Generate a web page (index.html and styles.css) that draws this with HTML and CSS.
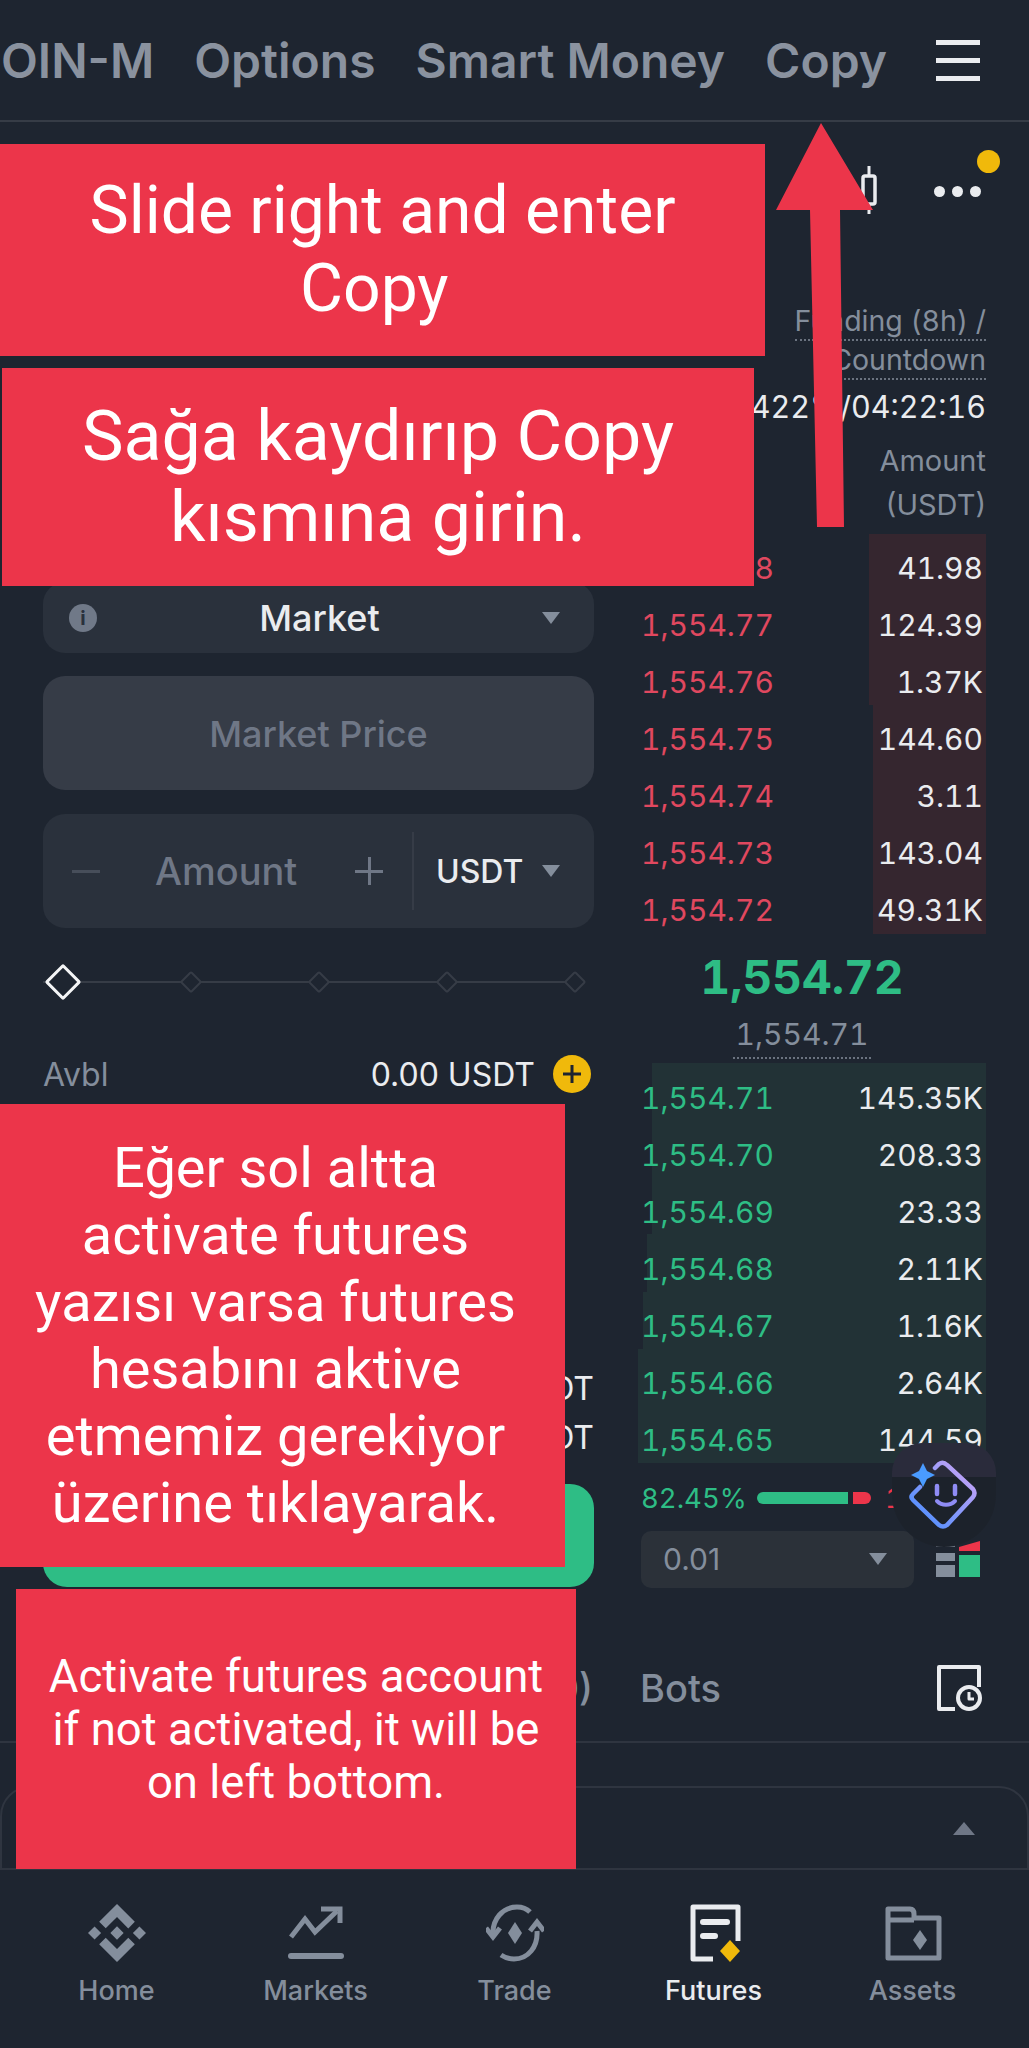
FILE: index.html
```html
<!DOCTYPE html>
<html lang="en">
<head>
    <meta charset="UTF-8">
    <meta name="viewport" content="width=device-width, initial-scale=1.0">
    <title>Futures</title>
    <link rel="stylesheet" href="styles.css">
</head>
<body>
<div class="screen">
    <header class="top-bar">
        <nav class="top-tabs">
            <span>COIN-M</span>
            <span>Options</span>
            <span>Smart Money</span>
            <span>Copy</span>
        </nav>
        <div class="burger"><i></i><i></i><i></i></div>
    </header>

    <main class="trade">
        <section class="order-form">
            <div class="field field-type">
                <span class="info">i</span>
                <span class="field-label">Market</span>
                <span class="caret"></span>
            </div>
            <div class="field field-price">Market Price</div>
            <div class="field field-amount">
                <span class="minus"></span>
                <span class="amount-label">Amount</span>
                <span class="plus"></span>
                <span class="unit">USDT <span class="caret"></span></span>
            </div>
            <div class="slider">
                <i class="knob"></i><i class="tick"></i><i class="tick"></i><i class="tick"></i><i class="tick"></i>
            </div>
            <div class="avbl">
                <span class="avbl-name">Avbl</span>
                <span class="avbl-value">0.00 USDT</span>
                <span class="add">
                    <svg width="22" height="22" viewBox="0 0 22 22"><path d="M11 2v18M2 11h18" stroke="#1e2530" stroke-width="3" fill="none"/></svg>
                </span>
            </div>
            <div class="summary">
                <div>Max 0.00 USDT</div>
                <div>Cost 0.00 USDT</div>
            </div>
            <div class="buy-button"></div>
        </section>

        <section class="book">
            <div class="book-tools">
                <svg class="candle" width="20" height="48" viewBox="0 0 20 48"><path d="M10 0v10M10 38v10" stroke="#eaecef" stroke-width="3"/><rect x="4" y="10" width="12" height="28" rx="2" fill="none" stroke="#eaecef" stroke-width="3.5"/></svg>
                <div class="dots"><i></i><i></i><i></i></div>
                <span class="notice"></span>
            </div>
            <div class="book-info">
                <div><span class="dotted">Funding (8h) /</span></div>
                <div><span class="dotted">Countdown</span></div>
                <div class="funding">0.0422%/04:22:16</div>
            </div>
            <div class="book-head">Amount<br>(USDT)</div>

            <div class="row ask"><i class="depth" style="width:33.6%"></i><span>1,554.78</span><b>41.98</b></div>
            <div class="row ask"><i class="depth" style="width:33.6%"></i><span>1,554.77</span><b>124.39</b></div>
            <div class="row ask"><i class="depth" style="width:33.6%"></i><span>1,554.76</span><b>1.37K</b></div>
            <div class="row ask"><i class="depth" style="width:32.5%"></i><span>1,554.75</span><b>144.60</b></div>
            <div class="row ask"><i class="depth" style="width:32.5%"></i><span>1,554.74</span><b>3.11</b></div>
            <div class="row ask"><i class="depth" style="width:32.5%"></i><span>1,554.73</span><b>143.04</b></div>
            <div class="row ask"><i class="depth" style="width:32.5%"></i><span>1,554.72</span><b>49.31K</b></div>

            <div class="last-price">1,554.72</div>
            <div class="mark-price"><span>1,554.71</span></div>

            <div class="row bid"><i class="depth" style="width:96%"></i><span>1,554.71</span><b>145.35K</b></div>
            <div class="row bid"><i class="depth" style="width:96%"></i><span>1,554.70</span><b>208.33</b></div>
            <div class="row bid"><i class="depth" style="width:96%"></i><span>1,554.69</span><b>23.33</b></div>
            <div class="row bid"><i class="depth" style="width:97.4%"></i><span>1,554.68</span><b>2.11K</b></div>
            <div class="row bid"><i class="depth" style="width:98.6%"></i><span>1,554.67</span><b>1.16K</b></div>
            <div class="row bid"><i class="depth" style="width:100%"></i><span>1,554.66</span><b>2.64K</b></div>
            <div class="row bid"><i class="depth" style="width:100%"></i><span>1,554.65</span><b>144.59</b></div>

            <div class="ratio">
                <span class="ratio-buy">82.45%</span>
                <i class="ratio-green"></i>
                <i class="ratio-red"></i>
                <span class="ratio-sell">17.55%</span>
            </div>
            <div class="book-foot">
                <div class="step">0.01 <span class="caret"></span></div>
                <svg width="46" height="38" viewBox="0 0 46 38"><path d="M24 7l21-6v10H24z" fill="#ec354a"/><path d="M1 4h19v3H1z" fill="#6b7380"/><path d="M1 13h19v8H1zM1 25h19v12H1z" fill="#848e9c"/><path d="M24 15h21v22H24z" fill="#2ebd85"/></svg>
            </div>
        </section>
    </main>

    <div class="sub-tabs">
        <span class="sub-left">Positions (0)</span>
        <span class="sub-bots">Bots</span>
        <svg width="46" height="46" viewBox="0 0 46 46" fill="none" stroke="#eaecef" stroke-width="4" stroke-linejoin="round"><path d="M19 44H3V2h40v20"/><circle cx="33" cy="33" r="11"/><path d="M33 27v7h5" stroke-width="3"/></svg>
    </div>

    <div class="panel">
        <span class="panel-arrow"></span>
    </div>

    <nav class="bottom-nav">
        <div class="nav-item">
            <svg width="58" height="58" viewBox="0 0 126.61 126.61" fill="#848e9c"><path d="M38.73 53.2l24.59-24.58 24.6 24.6 14.3-14.31L63.32 0 24.42 38.9zM0 63.31l14.3-14.31 14.31 14.31-14.31 14.3zM38.73 73.41L63.32 98l24.59-24.59 14.31 14.29-38.9 38.91-38.91-38.88v-.03zM98 63.31l14.3-14.31 14.31 14.3-14.31 14.32zM77.83 63.3L63.32 48.78 52.59 59.51l-1.24 1.23-2.54 2.54 14.51 14.5 14.51-14.47z"/></svg>
            <span>Home</span>
        </div>
        <div class="nav-item">
            <svg width="58" height="58" viewBox="0 0 58 58" fill="none" stroke="#848e9c" stroke-width="5"><path d="M4 33l14-18 10 13L50 7"/><path d="M34 5h19v14"/><path d="M4 52h50" stroke-width="6" stroke-linecap="round"/></svg>
            <span>Markets</span>
        </div>
        <div class="nav-item">
            <svg width="58" height="58" viewBox="0 0 58 58" fill="none" stroke="#848e9c" stroke-width="5"><path d="M7 31C6 15 17 3 31 3c5 0 10 2 13 5"/><path d="M51 27c1 16-9 28-23 28-5 0-10-2-13-4"/><path d="M0 24l7 9 7-9M44 27l7-9 7 9"/><path d="M29 18l7 11-7 11-7-11z" fill="#848e9c" stroke="none"/></svg>
            <span>Trade</span>
        </div>
        <div class="nav-item active">
            <svg width="58" height="58" viewBox="0 0 58 58" fill="none"><path d="M28 55H8V3h45v34" stroke="#eaecef" stroke-width="5" stroke-linejoin="round"/><path d="M18 18h24M18 32h12" stroke="#eaecef" stroke-width="6" stroke-linecap="round"/><path d="M45 36l10 11-10 11-10-11z" fill="#f0b90b"/></svg>
            <span>Futures</span>
        </div>
        <div class="nav-item">
            <svg width="58" height="58" viewBox="0 0 58 58" fill="none" stroke="#848e9c" stroke-width="5" stroke-linejoin="round"><path d="M4 54V5h22c3 0 4 2 4 5v4h25v40z"/><path d="M4 16h26"/><path d="M36 26l7 10-7 10-7-10z" fill="#848e9c" stroke="none"/></svg>
            <span>Assets</span>
        </div>
    </nav>

    <!-- tutorial marks drawn over the app -->
    <div class="callout callout-slide">Slide right and enter<br>Copy&nbsp;</div>
    <div class="callout callout-saga">Sağa kaydırıp Copy<br>kısmına girin.</div>
    <div class="callout callout-eger">Eğer sol altta<br>activate futures<br>yazısı varsa futures<br>hesabını aktive<br>etmemiz gerekiyor<br>üzerine tıklayarak.</div>
    <div class="callout callout-activate">Activate futures account<br>if not activated, it will be<br>on left bottom.</div>
    <svg class="up-arrow" width="100" height="406" viewBox="0 0 100 406"><path d="M46 0L98 87H65L69 404H42L35 87H1z" fill="#ec354a"/></svg>

    <div class="assistant">
        <svg width="72" height="72" viewBox="0 0 72 72" fill="none">
            <defs><linearGradient id="ai" x1="0" y1="1" x2="1" y2="0"><stop offset="0" stop-color="#3f8cff"/><stop offset="1" stop-color="#d5a6f5"/></linearGradient></defs>
            <path d="M12 27L5 34Q2 37 5 40L31 65Q35 68 39 65L65 37Q68 33 65 29L39 5Q35 1 31 4L27 8" stroke="url(#ai)" stroke-width="4.5" stroke-linecap="round"/>
            <path d="M15 3l4 8 8 4-8 4-4 8-4-8-8-4 8-4z" fill="#4a9bff"/>
            <path d="M29 26v8M47 26v8" stroke="#8f8cf5" stroke-width="4.5" stroke-linecap="round"/>
            <path d="M29 41c5 5 13 5 18 0" stroke="#8f8cf5" stroke-width="4" stroke-linecap="round"/>
        </svg>
    </div>
</div>
</body>
</html>
```

FILE: styles.css
```css
* {
    box-sizing: border-box;
}
body {
    margin: 0;
    background: #1e2530;
    font-family: Inter, "Liberation Sans", sans-serif;
    color: #eaecef;
}
i {
    display: block;
    font-style: normal;
}
.screen {
    position: relative;
    width: 1029px;
    height: 2048px;
    overflow: hidden;
    background: #1e2530;
}

/* top bar */
.top-bar {
    height: 122px;
    display: flex;
    align-items: center;
    border-bottom: 2px solid #363c46;
    padding: 0 49px 0 0;
}
.top-tabs {
    flex: 1;
    min-width: 0;
    display: flex;
    justify-content: flex-end;
    gap: 40px;
    padding-right: 49px;
    font-size: 48px;
    font-weight: 600;
    color: #8a929f;
    white-space: nowrap;
    overflow: hidden;
}
.burger {
    width: 44px;
    display: flex;
    flex-direction: column;
    gap: 13px;
}
.burger i {
    height: 5px;
    background: #eaecef;
}

/* main two columns */
.trade {
    display: flex;
    padding-left: 43px;
    height: 1486px;
}
.order-form {
    width: 551px;
    padding-top: 460px;
    margin-right: 44px;
}
.field {
    display: flex;
    align-items: center;
    background: #2a313c;
    border-radius: 22px;
}
.field-type {
    height: 71px;
    padding: 0 34px 0 26px;
    justify-content: space-between;
}
.field-label {
    font-size: 36px;
    font-weight: 500;
}
.info {
    width: 28px;
    height: 28px;
    border-radius: 50%;
    background: #707988;
    color: #2a313c;
    font-size: 20px;
    font-weight: 700;
    text-align: center;
    line-height: 28px;
}
.caret {
    display: inline-block;
    width: 0;
    height: 0;
    border-left: 9px solid transparent;
    border-right: 9px solid transparent;
    border-top: 12px solid #848e9c;
}
.field-price {
    height: 114px;
    margin-top: 23px;
    padding-top: 2px;
    justify-content: center;
    background: #363c47;
    color: #6f7786;
    font-size: 36px;
    font-weight: 500;
}
.field-amount {
    height: 114px;
    margin-top: 24px;
    padding: 0 34px 0 29px;
    font-size: 38px;
    color: #6f7786;
}
.minus {
    width: 28px;
    height: 3px;
    background: #474e5a;
}
.amount-label {
    margin-left: 55px;
    width: 145px;
    font-weight: 500;
}
.plus {
    width: 28px;
    height: 28px;
    margin-left: 55px;
    background: linear-gradient(#6f7786, #6f7786) center / 28px 3px no-repeat,
                linear-gradient(#6f7786, #6f7786) center / 3px 28px no-repeat;
}
.unit {
    margin-left: 29px;
    height: 78px;
    padding-left: 22px;
    border-left: 2px solid #363c47;
    display: flex;
    flex: 1;
    align-items: center;
    justify-content: space-between;
    color: #eaecef;
    font-size: 32px;
    font-weight: 500;
}
.slider {
    margin-top: 36px;
    width: 535px;
    height: 36px;
    display: flex;
    align-items: center;
    gap: 112px;
    background: linear-gradient(#363c46, #363c46) center / 100% 2px no-repeat;
}
.knob {
    flex-shrink: 0;
    width: 26px;
    height: 26px;
    transform: rotate(45deg);
    border: 3px solid #f4f5f6;
    background: #1e2530;
    margin: 0 -5px 0 7px;
    border-radius: 2px;
}
.tick {
    flex-shrink: 0;
    width: 16px;
    height: 16px;
    transform: rotate(45deg);
    border: 2px solid #363c46;
    background: #1e2530;
    border-radius: 2px;
}
.avbl {
    margin-top: 54px;
    height: 40px;
    display: flex;
    align-items: center;
    font-size: 32px;
}
.avbl-name {
    flex: 1;
    color: #848e9c;
}
.add {
    width: 38px;
    height: 38px;
    margin-left: 18px;
    margin-right: 3px;
    border-radius: 50%;
    background: #f0b90b;
    display: flex;
    align-items: center;
    justify-content: center;
}
.summary {
    margin-top: 270px;
    text-align: right;
    font-size: 32px;
    line-height: 49px;
}
.buy-button {
    height: 103px;
    margin-top: 22px;
    background: #2ebd85;
    border-radius: 24px;
}

/* order book */
.book {
    width: 348px;
    flex-shrink: 0;
}
.book-tools {
    position: relative;
    height: 179px;
    padding-top: 44px;
    display: flex;
    justify-content: flex-end;
    gap: 55px;
    padding-right: 5px;
}
.dots {
    display: flex;
    gap: 7px;
    margin-top: 20px;
}
.dots i {
    width: 11px;
    height: 11px;
    border-radius: 50%;
    background: #eaecef;
}
.notice {
    position: absolute;
    right: -14px;
    top: 28px;
    width: 23px;
    height: 23px;
    border-radius: 50%;
    background: #f0b90b;
}
.book-info {
    text-align: right;
    font-size: 28.5px;
    color: #848e9c;
    line-height: 39px;
    white-space: nowrap;
    font-variant-numeric: tabular-nums;
}
.dotted {
    border-bottom: 2px dotted #6b7380;
    padding-bottom: 1px;
}
.funding {
    color: #eaecef;
    margin-top: 8px;
    font-size: 30.5px;
}
.book-head {
    margin-top: 13px;
    text-align: right;
    font-size: 29px;
    line-height: 44px;
    color: #848e9c;
    height: 95px;
}
.row {
    position: relative;
    height: 57.15px;
    display: flex;
    align-items: center;
    justify-content: space-between;
    padding: 10px 3px 0 3px;
    font-size: 30px;
    font-variant-numeric: tabular-nums;
}
.row span, .row b {
    position: relative;
    font-weight: 400;
}
.depth {
    position: absolute;
    right: 0;
    top: 0;
    bottom: 0;
}
.ask .depth {
    background: #35262f;
}
.ask span {
    color: #e0485f;
}
.bid {
    padding-top: 12px;
}
.bid .depth {
    background: #223236;
}
.bid span {
    color: #2ebd85;
}
.last-price {
    height: 84px;
    padding: 15px 20px 0 0;
    text-align: center;
    font-size: 46px;
    font-weight: 700;
    color: #2ebd85;
    font-variant-numeric: tabular-nums;
}
.mark-price {
    height: 45px;
    padding-right: 20px;
    text-align: center;
    font-size: 30px;
    line-height: 32px;
    color: #848e9c;
    font-variant-numeric: tabular-nums;
}
.mark-price span {
    border-bottom: 2px dotted #6b7380;
    padding: 0 3px 5px;
}
.ratio {
    display: flex;
    align-items: center;
    height: 68px;
    padding: 3px 0 0 3px;
    font-size: 27.5px;
    overflow: hidden;
    white-space: nowrap;
    font-variant-numeric: tabular-nums;
}
.ratio-buy {
    flex-shrink: 0;
    width: 116px;
    color: #2ebd85;
}
.ratio-green {
    flex-shrink: 0;
    width: 91px;
    height: 12px;
    background: #2ebd85;
    border-radius: 6px 0 0 6px;
}
.ratio-red {
    flex-shrink: 0;
    width: 18px;
    height: 12px;
    margin-left: 5px;
    background: #ec354a;
    border-radius: 0 6px 6px 0;
}
.ratio-sell {
    color: #ec354a;
    margin-left: 14px;
}
.book-foot {
    display: flex;
    align-items: center;
    justify-content: space-between;
    padding-left: 3px;
    padding-right: 5px;
}
.step {
    width: 273px;
    height: 57px;
    padding: 0 27px 0 22px;
    display: flex;
    align-items: center;
    justify-content: space-between;
    background: #2b3139;
    border-radius: 10px;
    font-size: 30px;
    color: #848e9c;
}

/* lower tabs and panel */
.sub-tabs {
    height: 135px;
    display: flex;
    align-items: center;
    padding: 26px 47px 0 43px;
    border-bottom: 2px solid #2f3540;
    font-size: 38px;
    font-weight: 500;
    color: #848e9c;
}
.sub-left {
    width: 550px;
    text-align: right;
    white-space: nowrap;
}
.sub-bots {
    margin-left: 47px;
    flex: 1;
}
.panel {
    height: 84px;
    margin-top: 43px;
    border: 2px solid #2f3540;
    border-radius: 30px 30px 0 0;
    display: flex;
    align-items: center;
    justify-content: flex-end;
    padding-right: 52px;
}
.panel-arrow {
    width: 0;
    height: 0;
    border-left: 11px solid transparent;
    border-right: 11px solid transparent;
    border-bottom: 13px solid #6f7786;
}
.bottom-nav {
    display: grid;
    grid-template-columns: repeat(5, 199px);
    padding: 34px 17px 0;
}
.nav-item {
    display: flex;
    flex-direction: column;
    align-items: center;
    gap: 12px;
    font-size: 27px;
    font-weight: 500;
    color: #848e9c;
}
.nav-item.active {
    color: #eaecef;
}

/* tutorial overlays */
.callout {
    position: absolute;
    display: flex;
    align-items: center;
    justify-content: center;
    text-align: center;
    background: #ec354a;
    color: #fff;
    font-family: Roboto, sans-serif;
}
.callout-slide {
    left: 0;
    top: 144px;
    width: 765px;
    height: 212px;
    font-size: 66px;
    line-height: 78px;
}
.callout-saga {
    left: 2px;
    top: 368px;
    width: 752px;
    height: 218px;
    font-size: 70px;
    line-height: 81px;
}
.callout-eger {
    left: 0;
    top: 1104px;
    width: 565px;
    height: 463px;
    padding-right: 14px;
    font-size: 56px;
    line-height: 67px;
}
.callout-activate {
    left: 16px;
    top: 1589px;
    width: 560px;
    height: 280px;
    font-size: 45.5px;
    line-height: 53px;
}
.up-arrow {
    position: absolute;
    left: 775px;
    top: 123px;
}
.assistant {
    position: absolute;
    left: 892px;
    top: 1443px;
    width: 104px;
    height: 104px;
    border-radius: 30px 30px 50% 50%;
    background: linear-gradient(#2a2b3b 0, #2a2b3b 33%, #1c222b 33%);
    display: flex;
    align-items: center;
    justify-content: center;
    padding-top: 2px;
}
```
